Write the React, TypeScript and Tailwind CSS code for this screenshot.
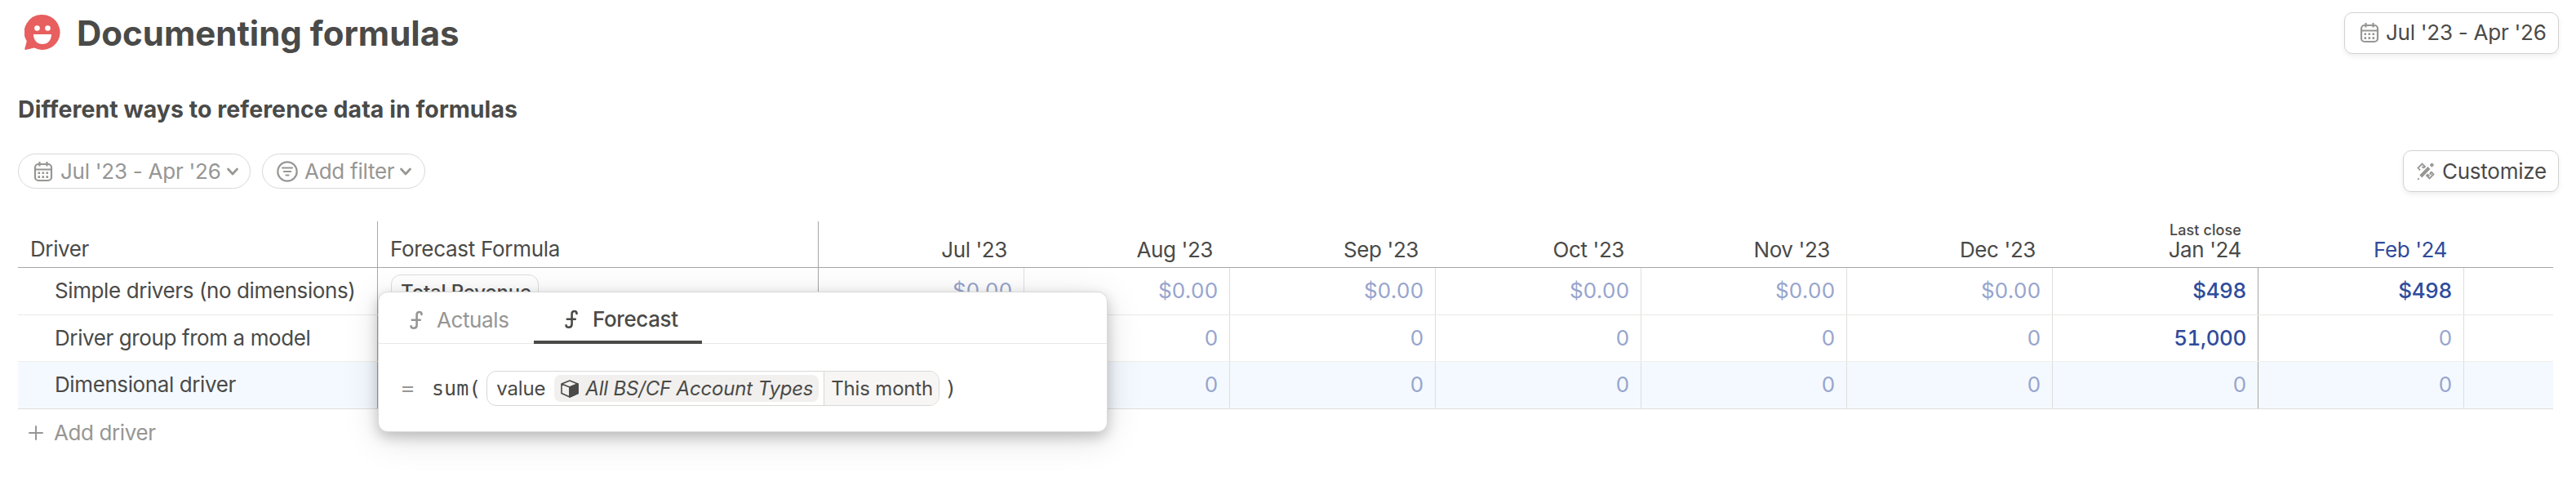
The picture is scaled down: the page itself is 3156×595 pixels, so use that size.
import React from "react";

const months = ["Jul '23", "Aug '23", "Sep '23", "Oct '23", "Nov '23", "Dec '23", "Jan '24", "Feb '24"];
const rows = [
  { name: "Simple drivers (no dimensions)", values: ["$0.00", "$0.00", "$0.00", "$0.00", "$0.00", "$0.00", "$498", "$498"], pill: "Total Revenue" },
  { name: "Driver group from a model", values: ["0", "0", "0", "0", "0", "0", "51,000", "0"] },
  { name: "Dimensional driver", values: ["0", "0", "0", "0", "0", "0", "0", "0"], active: true },
];

function CalendarIcon() {
  return (
    <svg className="h-[26px] w-6 shrink-0 text-[#969694]" viewBox="0 0 24 26" fill="none" stroke="currentColor" strokeWidth="2.200">
      <rect x="2" y="4" width="20" height="20" rx="4" />
      <path d="M2 10.500h20M7.500 1v5.500M16.500 1v5.500" />
      <path strokeWidth="2.600" strokeDasharray="2.600 2.400" d="M5.500 14.800h12.600M5.500 19.600h12.600" />
    </svg>
  );
}

function Chevron() {
  return (
    <svg className="h-[10px] w-[14px] shrink-0" viewBox="0 0 14 10" fill="none" stroke="currentColor" strokeWidth="2.600" strokeLinecap="round" strokeLinejoin="round">
      <path d="M1.500 2L7 8l5.500-6" />
    </svg>
  );
}

function FunctionIcon() {
  return (
    <svg className="h-6 w-4 shrink-0" viewBox="0 0 16 24" fill="none" stroke="currentColor" strokeWidth="2.600" strokeLinecap="round" strokeLinejoin="round">
      <path d="M14.500 5V4.500C14.500 2.800 13.300 2 11.800 2C9.800 2 8.600 3 8.600 5V18C8.600 20.600 7 21.700 4.800 21.700C3 21.700 1.600 20.800 1.600 19.200M2.800 11.700H12.800" />
    </svg>
  );
}

export default function App() {
  return (
    <div className="relative h-[595px] w-[3156px] overflow-hidden bg-white pl-[22px] font-['Inter',sans-serif] text-[26px] leading-8 font-[430] tracking-[-0.4px] text-[#4a4a48]">
      <header className="flex h-20 items-center justify-between pr-[21px]">
        <div className="flex items-center">
          <svg className="ml-2 h-11 w-11" viewBox="0 0 44 44">
            <path fill="#e75f5e" d="M22 0A21.500 21.500 0 1 1 12 40.500L1.500 43Q0 43 .4 41.300L2.800 32.500A21.500 21.500 0 0 1 22 0Z" />
            <g fill="#fff"><circle cx="15.500" cy="16.500" r="3.300" /><circle cx="28.500" cy="16.500" r="3.300" /><path d="M11 24H33C33 31.500 28.500 36 22 36S11 31.500 11 24Z" /></g>
          </svg>
          <h1 className="ml-5 pt-px text-[42px] leading-[48px] font-bold tracking-normal">Documenting formulas</h1>
        </div>
        <button className="flex h-[51px] w-[263px] items-center rounded-[10px] border border-[#d2d2d0] pl-[18px] tracking-[-0.25px] shadow-[0_3px_6px_rgba(0,0,0,0.07)]">
          <CalendarIcon /><span className="ml-2 whitespace-nowrap">Jul '23 - Apr '26</span>
        </button>
      </header>
      <h2 className="mt-[38px] text-[28.5px] leading-8 font-bold tracking-[0.05px]">Different ways to reference data in formulas</h2>
      <div className="mt-[34px] flex h-[51px] items-center justify-between pr-[21px]">
        <div className="flex gap-[14px] tracking-[-0.25px] text-[#969694]">
          <div className="flex h-[43px] w-[285px] items-center rounded-full border border-[#d8d8d6] pl-[18px]"><CalendarIcon /><span className="mr-[7px] ml-[9px] whitespace-nowrap">Jul '23 - Apr '26</span><Chevron /></div>
          <div className="flex h-[43px] w-[200px] items-center rounded-full border border-[#d8d8d6] pl-[17px]">
            <svg className="h-[26px] w-[26px]" viewBox="0 0 26 26" fill="none" stroke="currentColor" strokeWidth="2.200" strokeLinecap="round"><circle cx="13" cy="13" r="11.700" /><path d="M7 8.500h12M8.800 13h8.400M11.500 17.500h3" /></svg>
            <span className="mr-[7px] ml-2 whitespace-nowrap">Add filter</span><Chevron />
          </div>
        </div>
        <button className="flex h-[51px] w-[191px] items-center rounded-[10px] border border-[#d2d2d0] pl-4 tracking-[-0.25px] shadow-[0_3px_6px_rgba(0,0,0,0.07)]">
          <svg className="h-[22px] w-[22px] text-[#969694]" viewBox="0 0 22 22" fill="none" stroke="currentColor" strokeWidth="1.800">
            <path d="M4 9.500L1.500 6.500L6.500 1.500L10 5L8.200 6.800M6.500 4.800L8.200 6.500M18 11.500L20.500 14.500L15.500 19.500L12 16L13.800 14.200M15.500 16.500L13.800 14.800M18 11.500L16.300 13.200L18 15" />
            <path strokeWidth="4" d="M4.800 17L15 6.500" /><path strokeWidth="3.800" d="M17 4.300L19.800 1.600" /><path strokeWidth="2" d="M1.200 20.800L2.600 19.400" />
          </svg>
          <span className="ml-[9px]">Customize</span>
        </button>
      </div>
      <div className="mt-9 w-[3106px]">
        <div className="flex h-[57px] border-b border-[#a6a6a4]">
          <div className="w-[441px] border-r border-[#a6a6a4] pt-[18px] pl-[15px]">Driver</div>
          <div className="w-[540px] border-r border-[#a6a6a4] pt-[18px] pl-[15px] tracking-[-0.3px]">Forecast Formula</div>
          {months.map((m, i) => (
            <div key={m} className={i === 7 ? "flex w-[252px] flex-col items-end justify-end pr-[21px] pb-[5px] text-[#2f4c9c]" : "flex w-[252px] flex-col items-end justify-end pr-[21px] pb-[5px]"}>
              {i === 6 && <span className="text-[18px] leading-[17px] font-medium tracking-[0.1px]">Last close</span>}
              <span>{m}</span>
            </div>
          ))}
        </div>
        {rows.map((r, ri) => (
          <div key={r.name} className={r.active ? "flex h-[58px] border-b border-[#dededc] bg-[#f4f9ff]" : ri === 0 ? "flex h-[58px] border-b border-[#e8e8e6]" : "flex h-[57px] border-b border-[#efefeb]"}>
            <div className="w-[441px] border-r border-[#a6a6a4] pt-3 pl-[45px] whitespace-nowrap">{r.name}</div>
            <div className="w-[540px] border-r border-[#a6a6a4] pt-2 pl-4">
              {r.pill && <span className="flex h-[43px] w-[181px] items-center rounded-xl border border-[#dededc] pl-[11px] text-2xl font-medium tracking-[-0.15px] whitespace-nowrap">{r.pill}</span>}
            </div>
            {r.values.map((v, i) => (
              <div key={i} className={(i === 6 ? "border-[#a6a6a4] " : "border-[#dededc] ") + (v.length > 1 && v !== "$0.00" ? "w-[252px] border-r pt-3 pr-[14px] text-right tabular-nums tracking-[-0.4px] font-[450] text-[#2f4c9c]" : "w-[252px] border-r pt-3 pr-[14px] text-right tabular-nums tracking-[-0.25px] text-[#97a5cd]")}>{v}</div>
            ))}
          </div>
        ))}
        <div className="flex h-[57px] items-center pl-[13px] text-[#969694]">
          <svg className="h-[18px] w-[18px]" viewBox="0 0 18 18" stroke="currentColor" strokeWidth="2" strokeLinecap="round"><path d="M9 1v16M1 9h16" /></svg>
          <span className="ml-[13px]">Add driver</span>
        </div>
      </div>
      <section className="absolute top-[357px] left-[463px] h-[172px] w-[894px] rounded-xl border border-[#dadad8] bg-white shadow-[0_6px_16px_rgba(0,0,0,0.2),0_8px_44px_rgba(0,0,0,0.13)]">
        <nav className="flex h-[63px] items-start border-b border-[#e8e8e6]">
          <div className="flex h-[63px] w-[190px] items-center pt-1 pl-[38px] text-[#969694]"><FunctionIcon /><span className="ml-[17px]">Actuals</span></div>
          <div className="flex h-[63px] w-[206px] items-center border-b-[4px] border-[#4a4a48] pt-[7px] pl-[38px] font-[450]"><FunctionIcon /><span className="ml-[18px]">Forecast</span></div>
        </nav>
        <div className="flex h-[109px] items-center pl-[28px] text-2xl tracking-normal">
          <span className="font-['DejaVu_Sans_Mono',monospace] text-[25px] text-[#969694]">=</span>
          <span className="ml-[22px] font-['DejaVu_Sans_Mono',monospace] text-[25px]">sum(</span>
          <div className="ml-[7px] flex h-[43px] w-[555px] items-center overflow-hidden rounded-xl border border-[#d8d8d6] pl-[11px] tracking-[-0.18px] whitespace-nowrap">
            <span className="w-[60px]">value</span>
            <div className="ml-[11px] flex h-[33px] w-[324px] shrink-0 items-center rounded-lg bg-[#f1f0ee] pl-2">
              <svg className="h-[22px] w-[22px]" viewBox="0 0 22 22" fill="none" stroke="currentColor" strokeWidth="1.600" strokeLinejoin="round"><path d="M11 1L21 5V16.500L11 21L1 16.500V5ZM1 5L11 9L21 5M11 9V21" /><path fill="currentColor" d="M11 9L21 5V16.500L11 21Z" /></svg>
              <em className="ml-2">All BS/CF Account Types</em>
            </div>
            <div className="ml-[6px] flex h-full flex-1 items-center border-l border-[#d8d8d6] bg-[#f7f6f4] pl-2">This month</div>
          </div>
          <span className="ml-[6px] font-['DejaVu_Sans_Mono',monospace] text-[25px]">)</span>
        </div>
      </section>
    </div>
  );
}
